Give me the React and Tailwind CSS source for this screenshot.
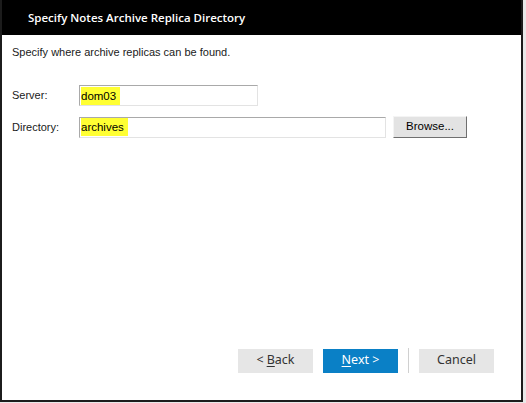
import React from 'react';

const sans = { fontFamily: '"Liberation Sans", Arial, sans-serif' };

const Field = ({ label, value, width, children }) => (
    <div className="flex items-center">
        <label className="w-[67px] text-[11px] text-[#1a1a1a]">{label}</label>
        <div
            className={`${width} h-[21px] border border-t-[#a9a9a9] border-l-[#a9a9a9] border-b-[#e3e3e3] border-r-[#e3e3e3] bg-white flex items-center pl-[1px]`}
        >
            <span className="bg-[#ffff33] text-[11.5px] leading-[18px] pr-[4px] text-black">{value}</span>
        </div>
        {children}
    </div>
);

const WizardButton = ({ children, primary }) => (
    <button
        type="button"
        className={`w-[75px] h-[24px] text-[12.5px] flex items-center justify-center ${
            primary ? 'bg-[#0a80c6] text-white' : 'bg-[#e6e6e6] text-[#333333]'
        }`}
        style={{ fontFamily: '"Noto Sans", "Open Sans", sans-serif' }}
    >
        {children}
    </button>
);

export default function App() {
    return (
        <div className="w-[526px] h-[403px] bg-[#e8e8e8]" style={sans}>
            <div className="w-[523px] h-[402px] flex flex-col border-l-2 border-r-2 border-b-2 border-[#1c1c1c] bg-white">
                <div className="h-[35px] bg-black flex items-center pl-[26px] shrink-0">
                    <h1
                        className="text-white text-[11.5px] font-semibold"
                        style={{ fontFamily: '"Open Sans", "Noto Sans", sans-serif' }}
                    >
                        Specify Notes Archive Replica Directory
                    </h1>
                </div>

                <div className="flex-1 flex flex-col px-[10px] pt-[10px]">
                    <p className="text-[11px] leading-[14px] text-[#1a1a1a]">
                        Specify where archive replicas can be found.
                    </p>

                    <div className="mt-[26px] flex flex-col gap-[10px]">
                        <Field label="Server:" value="dom03" width="w-[179px]" />
                        <Field label="Directory:" value="archives" width="w-[307px]">
                            <button
                                type="button"
                                className="ml-[7px] w-[74px] h-[22px] bg-[#e3e3e3] border border-t-[#f4f4f4] border-l-[#f4f4f4] border-b-[#6f6f6f] border-r-[#6f6f6f] text-[11.5px] text-black"
                            >
                                Browse...
                            </button>
                        </Field>
                    </div>

                    <div className="mt-auto mb-[27px] flex items-center justify-end pr-[17px]">
                        <WizardButton>
                            &lt; <span className="underline underline-offset-2 ml-[3px]">B</span>ack
                        </WizardButton>
                        <div className="ml-[10px]">
                            <WizardButton primary>
                                <span className="underline underline-offset-2">N</span>ext &gt;
                            </WizardButton>
                        </div>
                        <div className="w-[1px] h-[25px] bg-[#d0d0d0] mx-[10px]" />
                        <WizardButton>Cancel</WizardButton>
                    </div>
                </div>
            </div>
        </div>
    );
}
